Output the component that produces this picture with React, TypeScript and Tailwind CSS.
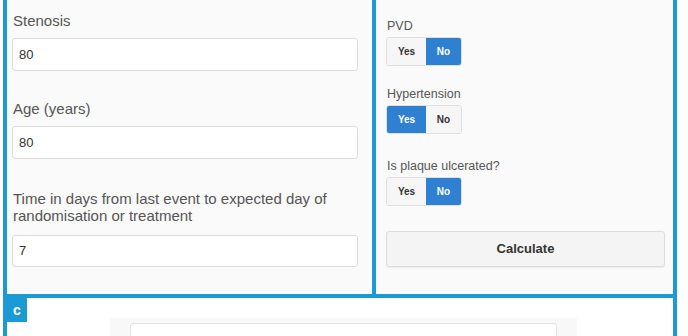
import * as React from "react"

const font = { fontFamily: '"Liberation Sans", Arial, sans-serif' }

function Field({ label, value, className, gap = "mt-[9px]" }: { label: React.ReactNode; value: string; className?: string; gap?: string }) {
  return (
    <div className={className}>
      <div className="pl-[1px] text-[15px] leading-[17px] text-[#555]">{label}</div>
      <div className={gap + " flex h-[33px] items-center rounded-[3px] border border-[#dcdcdc] bg-white pl-[6px] text-[13px] text-[#333]"}>
        {value}
      </div>
    </div>
  )
}

function Toggle({ label, yes, className }: { label: string; yes: boolean; className?: string }) {
  return (
    <div className={className}>
      <div className="pl-[1px] text-[12.5px] leading-[15px] text-[#555]">{label}</div>
      <div className="mt-[3px] flex h-[29px] w-[76px] overflow-hidden rounded-[3px] border border-[#dedede] text-[10px] font-bold">
        <div className={"flex w-[39px] items-center justify-center " + (yes ? "bg-[#2f80d0] text-white" : "bg-[#f6f6f6] text-[#333]")}>
          Yes
        </div>
        <div className={"flex flex-1 items-center justify-center " + (!yes ? "bg-[#2f80d0] text-white" : "bg-[#f6f6f6] text-[#333]")}>
          No
        </div>
      </div>
    </div>
  )
}

export default function App() {
  return (
    <div className="h-[336px] w-[688px] overflow-hidden bg-white pl-[3px]" style={font}>
      <div className="w-[674px] border-x-4 border-[#1b9ad6]">
        <div className="flex h-[298px] border-b-4 border-[#1b9ad6]">
          <div className="w-[369px] border-r-4 border-[#1b9ad6] bg-[#fafafa] pt-[12px] pl-[5px] pr-[14px]">
            <Field label="Stenosis" value="80" />
            <Field label="Age (years)" value="80" className="mt-[29px]" />
            <Field
              label={<>Time in days from last event to expected day of<br />randomisation or treatment</>}
              value="7"
              gap="mt-[11px]"
              className="mt-[31px] [&>div:last-child]:h-[32px]"
            />
          </div>
          <div className="flex-1 bg-[#fafafa] pt-[19px] pl-[10px] pr-[8px]">
            <Toggle label="PVD" yes={false} />
            <Toggle label="Hypertension" yes={true} className="mt-[21px]" />
            <Toggle label="Is plaque ulcerated?" yes={false} className="mt-[25px]" />
            <div className="mt-[25px] flex h-[36px] items-center justify-center rounded-[3px] border border-[#dcdcdc] bg-[#f4f4f4] text-[13px] font-bold text-[#333] shadow-[0_1px_1px_rgba(0,0,0,0.06)]">
              Calculate
            </div>
          </div>
        </div>
        <div className="flex h-[38px] items-start">
          <div className="flex h-[24px] w-[20px] items-center justify-center bg-[#1b9ad6] text-[14px] font-bold text-white">
            c
          </div>
          <div className="ml-[83px] mt-[20px] h-[18px] w-[467px] bg-[#f8f8f8] px-[20px] pt-[5px]">
            <div className="h-full rounded-t-[4px] border border-b-0 border-[#e2e2e2] bg-white" />
          </div>
        </div>
      </div>
    </div>
  )
}
